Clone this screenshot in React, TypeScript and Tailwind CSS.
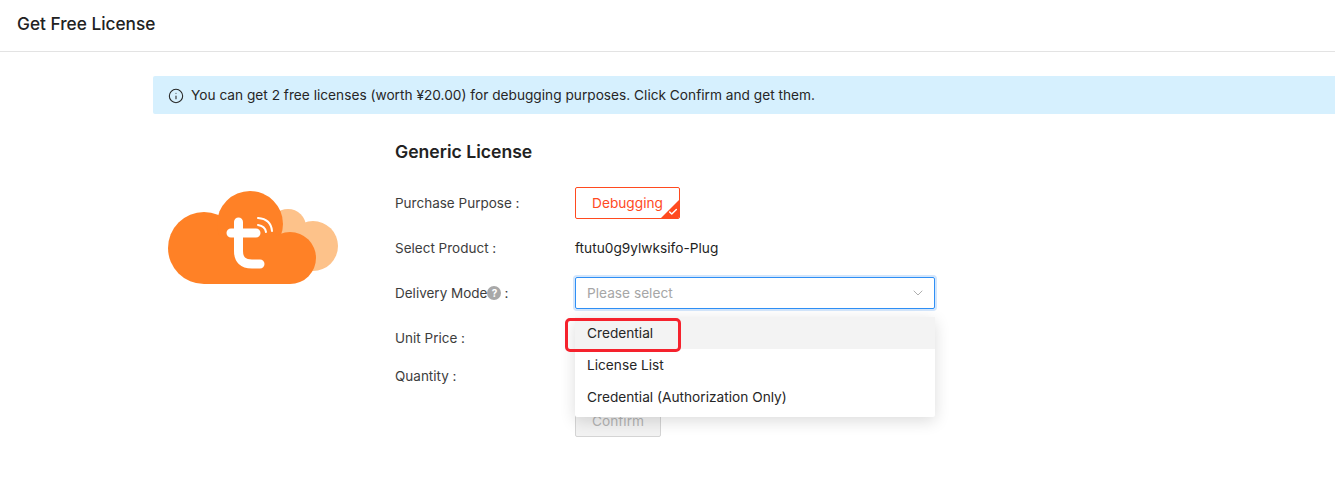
import { ChevronDown, Info, Check } from "lucide-react";

function CloudLogo() {
  return (
    <svg width="170" height="93" viewBox="0 0 170 93" fill="none">
      <g fill="#fdc28a">
        <circle cx="120" cy="36" r="18" />
        <circle cx="145" cy="55" r="25" />
        <rect x="115" y="40" width="30" height="39" />
      </g>
      <g fill="#ff8126">
        <circle cx="36" cy="57" r="36" />
        <circle cx="82" cy="33" r="33" />
        <circle cx="122" cy="67" r="26" />
        <rect x="36" y="45" width="86" height="48" />
      </g>
      <path d="M70.5 31V60Q70.5 73 84 73H92M63 42H88" stroke="#fff" strokeWidth="9" strokeLinecap="round" />
      <path d="M90 27Q103 28 104 40M90 34Q97 35 98 41" stroke="#fff" strokeWidth="2" strokeLinecap="round" />
    </svg>
  );
}

function Row({ label, className, children }: { label: React.ReactNode; className: string; children?: React.ReactNode }) {
  return (
    <div className={`flex items-center ${className}`}>
      <div className="w-[180px] text-[13.5px] text-[#3d3d3d]">{label}</div>
      {children}
    </div>
  );
}

export default function App() {
  return (
    <div className="h-[482px] overflow-hidden bg-white text-[14px] text-[#1f1f1f] font-['Inter','Noto_Sans',sans-serif]">
      <header className="h-[52px] border-b border-[#e3e3e3] pl-[17px] pb-[3px] flex items-center">
        <h1 className="text-[17.25px] font-medium text-[#222]">Get Free License</h1>
      </header>

      <div className="ml-[153px] mt-6 h-[38px] pt-px bg-[#d6f0fe] flex items-center pl-[15px] gap-[7px] rounded-l-[2px] text-[13.7px] text-[#262626]">
        <Info size={16} strokeWidth={1.6} />
        <span>You can get 2 free licenses (worth ¥20.00) for debugging purposes. Click Confirm and get them.</span>
      </div>

      <div className="flex ml-[168px]">
        <div className="w-[227px] pt-[77px]">
          <CloudLogo />
        </div>

        <div className="relative text-[13.7px]">
          <h2 className="mt-[27px] h-[22px] flex items-center text-[17.6px] font-semibold text-[#222]">Generic License</h2>

          <Row label="Purchase Purpose :" className="mt-6 h-8">
            <div className="relative h-8 w-[105px] border border-[#ff4a1f] rounded-[2px] flex items-center justify-center text-[#ff4a1f] overflow-hidden">
              Debugging
              <svg className="absolute right-0 bottom-0" width="18" height="18" viewBox="0 0 18 18">
                <path d="M18 0V18H0Z" fill="#ff4a1f" />
              </svg>
              <Check className="absolute right-[1px] bottom-[1px] text-white" size={10} strokeWidth={3.5} />
            </div>
          </Row>

          <Row label="Select Product :" className="mt-[13px] h-8">
            <span className="text-[13.7px] text-[#1f1f1f]">ftutu0g9ylwksifo-Plug</span>
          </Row>

          <Row
            label={
              <span className="flex items-center">
                Delivery Mode
                <span className="w-[14px] h-[14px] rounded-full bg-[#a8a8a8] text-white text-[10px] font-bold flex items-center justify-center">?</span>
                <span className="ml-[3px]">:</span>
              </span>
            }
            className="mt-[13px] h-8"
          >
            <div className="h-8 w-[360px] border border-[#2f8ff5] rounded-[2px] shadow-[0_0_0_2px_#d3e6fc] flex items-center justify-between pl-[11px] pr-[8px] text-[#a6a6a6]">
              Please select
              <ChevronDown size={16} strokeWidth={1.2} className="text-[#9a9a9a]" />
            </div>
          </Row>

          <Row label="Unit Price :" className="mt-[13px] h-8" />
          <Row label="Quantity :" className="mt-[6px] h-8" />

          <div className="ml-[180px] mt-[13px] h-8 w-[86px] border border-[#d4d4d4] bg-[#f2f2f2] rounded-[2px] flex items-center justify-center text-[#b4b4b4]">
            Confirm
          </div>

          <div className="absolute left-[180px] top-[203px] w-[360px] pb-1 bg-white shadow-[0_4px_16px_rgba(0,0,0,0.14)] rounded-[2px] text-[#262626]">
            <div className="h-8 pl-3 flex items-center bg-[#f3f3f3]">Credential</div>
            <div className="h-8 pl-3 flex items-center">License List</div>
            <div className="h-8 pl-3 flex items-center">Credential (Authorization Only)</div>
          </div>
          <div className="absolute left-[170px] top-[204px] w-[116px] h-[34px] border-[3px] border-[#f5222d] rounded-[5px]" />
        </div>
      </div>
    </div>
  );
}
